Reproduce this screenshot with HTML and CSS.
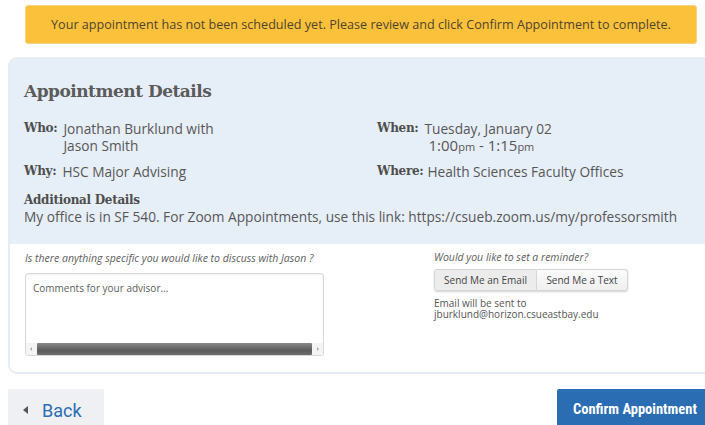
FILE: index.html
```html
<!DOCTYPE html>
<html lang="en">
<head>
<meta charset="utf-8">
<title>Confirm Appointment</title>
<link rel="stylesheet" href="styles.css">
</head>
<body>
  <div class="alert">Your appointment has not been scheduled yet. Please review and click Confirm Appointment to complete.</div>

  <section class="panel">
    <div class="details">
      <h1 class="title">Appointment Details</h1>
      <div class="grid">
        <div class="field">
          <span class="label">Who:</span>
          <span class="value">Jonathan Burklund with<br>Jason Smith</span>
        </div>
        <div class="field">
          <span class="label">When:</span>
          <span class="value">Tuesday, January 02<br><span class="time">1:00<small>pm</small> - 1:15<small>pm</small></span></span>
        </div>
        <div class="field">
          <span class="label">Why:</span>
          <span class="value">HSC Major Advising</span>
        </div>
        <div class="field">
          <span class="label where">Where:</span>
          <span class="value">Health Sciences Faculty Offices</span>
        </div>
      </div>
      <h2 class="subtitle">Additional Details</h2>
      <p class="notes">My office is in SF 540. For Zoom Appointments, use this link: https://csueb.zoom.us/my/professorsmith</p>
    </div>

    <div class="extras">
      <div class="discuss">
        <p class="prompt">Is there anything specific you would like to discuss with Jason ?</p>
        <div class="textarea">
          <div class="placeholder">Comments for your advisor...</div>
          <div class="hscroll">
            <span class="arrow arrow-left"></span>
            <span class="thumb"></span>
            <span class="arrow arrow-right"></span>
          </div>
        </div>
      </div>
      <div class="reminder">
        <p class="prompt">Would you like to set a reminder?</p>
        <div class="btn-group">
          <button class="seg active">Send Me an Email</button>
          <button class="seg">Send Me a Text</button>
        </div>
        <p class="sent">Email will be sent to<br>jburklund@horizon.csueastbay.edu</p>
      </div>
    </div>
  </section>

  <div class="actions">
    <button class="back"><span class="caret"></span>Back</button>
    <button class="confirm">Confirm Appointment</button>
  </div>
</body>
</html>
```

FILE: styles.css
```css
html, body {
  margin: 0;
  padding: 0;
  background: #ffffff;
  overflow: hidden;
}

body {
  width: 705px;
  height: 425px;
  font-family: "Open Sans", "Noto Sans", sans-serif;
  color: #555;
}

p { margin: 0; }

/* warning banner */
.alert {
  margin: 5px 8px 0 25px;
  height: 39px;
  box-sizing: border-box;
  background: #fbc13a;
  border: 1px solid #f7d27f;
  border-radius: 3px;
  display: flex;
  align-items: center;
  justify-content: center;
  font-size: 12.6px;
  color: #4f4431;
}

/* details card */
.panel {
  margin: 13px -20px 0 8px;
  border: 2px solid #e4ecf5;
  border-radius: 9px;
  overflow: hidden;
}

.details {
  background: #e6eef7;
  padding: 21px 0 18px 14px;
}

.title {
  margin: 0 0 18px;
  font-family: "DejaVu Serif", serif;
  font-weight: bold;
  font-size: 17px;
  line-height: 22px;
  color: #5b5b5b;
  letter-spacing: -0.5px;
}

.grid {
  display: grid;
  grid-template-columns: 353px 1fr;
  row-gap: 8px;
}

.field {
  display: flex;
  align-items: flex-start;
  font-size: 13.7px;
  line-height: 17px;
}

.label {
  font-family: "DejaVu Serif", serif;
  font-weight: bold;
  font-size: 12px;
  color: #4e4e4e;
  margin-right: 6px;
  letter-spacing: -0.3px;
}

.label.where { margin-right: 4px; }

.value {
  color: #575757;
}

.time {
  display: inline-block;
  margin-left: 4px;
  font-size: 15px;
}

.time small {
  font-size: 11px;
}

.subtitle {
  margin: 13px 0 0;
  font-family: "DejaVu Serif", serif;
  font-weight: bold;
  font-size: 12px;
  line-height: 15px;
  color: #4e4e4e;
  letter-spacing: -0.3px;
}

.notes {
  font-size: 13.7px;
  line-height: 18px;
  color: #575757;
}

/* lower white area */
.extras {
  display: flex;
  padding: 7px 0 16px 15px;
  background: #fff;
}

.prompt {
  font-style: italic;
  font-size: 10.5px;
  line-height: 14px;
  color: #606060;
}

.discuss { width: 299px; }

.textarea {
  margin-top: 8px;
  height: 83px;
  box-sizing: border-box;
  border: 1px solid #d9d9d9;
  border-radius: 3px;
  box-shadow: inset 0 1px 2px rgba(0,0,0,0.06);
  display: flex;
  flex-direction: column;
  justify-content: space-between;
  overflow: hidden;
}

.placeholder {
  padding: 7px 7px 0;
  font-size: 10px;
  line-height: 14px;
  color: #5e5e5e;
}

.hscroll {
  height: 12px;
  background: #f4f4f4;
  display: flex;
  align-items: center;
  padding: 0 4px;
  gap: 5px;
}

.thumb {
  flex: 1;
  height: 12px;
  background: linear-gradient(#8a8a8a, #5c5c5c 60%, #6e6e6e);
  border-radius: 1px;
}

.arrow {
  width: 0;
  height: 0;
  border-top: 2px solid transparent;
  border-bottom: 2px solid transparent;
}
.arrow-left { border-right: 2px solid #aaa; }
.arrow-right { border-left: 2px solid #aaa; }

.reminder {
  margin-left: 110px;
  margin-top: -1px;
}

.btn-group {
  display: flex;
  margin-top: 5px;
  width: 194px;
  height: 22px;
  border-radius: 3px;
  box-shadow: 0 1px 2px rgba(0,0,0,0.18);
}

.seg {
  margin: 0;
  height: 22px;
  padding: 0;
  border: 1px solid #d6d6d6;
  background: linear-gradient(#fbfbfb, #efefef);
  font-family: "Open Sans", "Noto Sans", sans-serif;
  font-size: 10px;
  color: #444;
}

.seg:first-child {
  width: 103px;
  border-radius: 3px 0 0 3px;
  background: #ececec;
}

.seg:last-child {
  width: 91px;
  border-left: none;
  border-radius: 0 3px 3px 0;
}

.sent {
  margin-top: 7px;
  font-size: 10px;
  line-height: 10.5px;
  color: #555;
}

/* footer actions */
.actions {
  display: flex;
  justify-content: space-between;
  align-items: flex-start;
  margin: 15px -12px 0 8px;
}

.back {
  width: 96px;
  height: 42px;
  border: none;
  border-radius: 2px;
  background: #eef0f3;
  display: flex;
  align-items: center;
  padding: 0 0 0 15px;
  font-family: Roboto, "Liberation Sans", sans-serif;
  font-size: 18px;
  color: #2d6db4;
}

.caret {
  width: 0;
  height: 0;
  border-top: 4px solid transparent;
  border-bottom: 4px solid transparent;
  border-right: 5px solid #555;
  margin-right: 14px;
}

.confirm {
  width: 160px;
  height: 42px;
  border: none;
  border-radius: 2px 0 0 0;
  background: #2a6db3;
  color: #fff;
  font-family: "Liberation Sans Narrow", "Roboto Condensed", Roboto, sans-serif;
  font-weight: bold;
  font-size: 14.5px;
  text-align: left;
  padding: 0 0 2px 16px;
}
```
